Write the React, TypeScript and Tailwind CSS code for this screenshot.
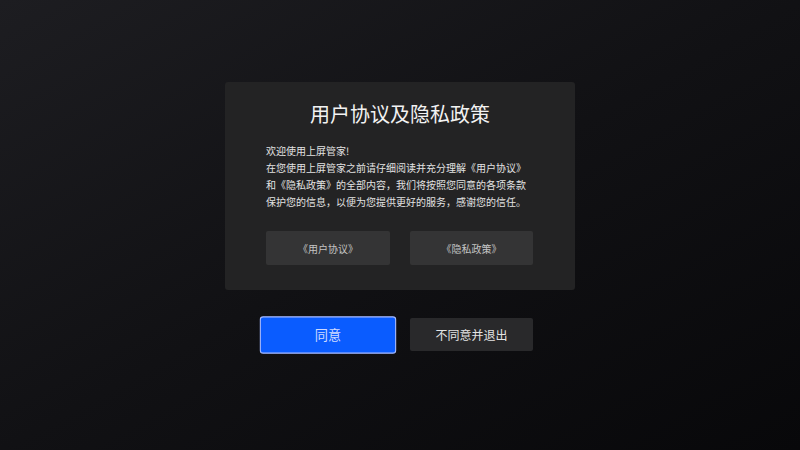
import React from "react";

export default function App() {
  return (
    <div
      className="w-[800px] h-[450px] overflow-hidden bg-gradient-to-br from-[#1d1d21] via-[#111114] to-[#08080a] flex flex-col items-center pt-[82px]"
      style={{ fontFamily: '"Noto Sans CJK SC", "Noto Sans", sans-serif' }}
    >
      <div className="w-[350px] h-[208px] bg-[#232324] rounded-[3px] flex flex-col px-[41px] pt-[18px]">
        <div className="h-[28px] leading-[28px] text-center text-[20px] text-[#f2f2f2]">
          用户协议及隐私政策
        </div>
        <div className="mt-[14px] text-[10px] leading-[17px] text-[#e2e2e2] whitespace-nowrap">
          <div>欢迎使用上屏管家!</div>
          <div>在您使用上屏管家之前请仔细阅读并充分理解《用户协议》</div>
          <div>和《隐私政策》的全部内容，我们将按照您同意的各项条款</div>
          <div>保护您的信息，以便为您提供更好的服务，感谢您的信任。</div>
        </div>
        <div className="mt-[21px] flex gap-[20px]">
          <div className="w-[124px] h-[34px] bg-[#343435] rounded-[2px] flex items-center justify-center text-[10px] text-[#c4c4c4]">
            《用户协议》
          </div>
          <div className="w-[123px] h-[34px] bg-[#343435] rounded-[2px] flex items-center justify-center text-[10px] text-[#c4c4c4]">
            《隐私政策》
          </div>
        </div>
      </div>
      <div className="mt-[28px] flex gap-[20px] ml-[-1px]">
        <div className="w-[124px] h-[34px] scale-[1.1] bg-[#0a5cff] border border-[#a9bcff] rounded-[3px] flex items-center justify-center text-[12px] text-[#cfdaff]">
          同意
        </div>
        <div className="w-[123px] h-[33px] bg-[#29292b] rounded-[2px] flex items-center justify-center text-[12px] text-[#e4e4e4]">
          不同意并退出
        </div>
      </div>
    </div>
  );
}
